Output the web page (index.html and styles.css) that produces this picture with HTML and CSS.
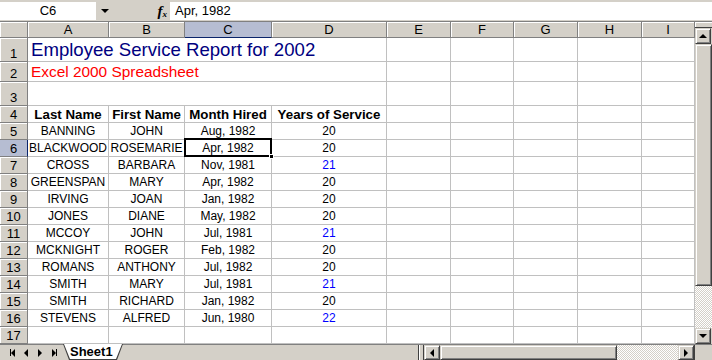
FILE: index.html
```html
<!DOCTYPE html>
<html lang="en">
<head>
    <meta charset="UTF-8">
    <title>Employee Service Report</title>
    <link rel="stylesheet" href="styles.css">
</head>
<body>
    <div class="app">
        <div class="formula-bar">
            <div class="name-box">C6</div>
            <div class="name-drop"><i class="tri-down"></i></div>
            <div class="fx"><i>f</i><span>x</span></div>
            <div class="formula">Apr, 1982</div>
        </div>

        <div class="workarea">
            <div class="sheet" id="sheet"></div>
            <div class="vscroll">
                <div class="split-v"></div>
                <div class="sbtn"><i class="tri-up"></i></div>
                <div class="vthumb"></div>
                <div class="track"></div>
                <div class="sbtn"><i class="tri-down"></i></div>
            </div>
        </div>

        <div class="bottom-bar">
            <div class="tab-nav">
                <span class="nav"><b class="bar"></b><i class="tri-left"></i></span>
                <span class="nav"><i class="tri-left"></i></span>
                <span class="nav"><i class="tri-right"></i></span>
                <span class="nav"><i class="tri-right"></i><b class="bar"></b></span>
            </div>
            <div class="tab"><span>Sheet1</span></div>
            <div class="tab-space"></div>
            <div class="split-h"></div>
            <div class="hscroll">
                <div class="sbtn"><i class="tri-left"></i></div>
                <div class="hthumb"></div>
                <div class="track"></div>
                <div class="sbtn"><i class="tri-right"></i></div>
            </div>
            <div class="corner"></div>
        </div>
    </div>

    <script>
        const letters = ['A', 'B', 'C', 'D', 'E', 'F', 'G', 'H', 'I'];
        const employees = [
            ['BANNING', 'JOHN', 'Aug, 1982', 20],
            ['BLACKWOOD', 'ROSEMARIE', 'Apr, 1982', 20],
            ['CROSS', 'BARBARA', 'Nov, 1981', 21],
            ['GREENSPAN', 'MARY', 'Apr, 1982', 20],
            ['IRVING', 'JOAN', 'Jan, 1982', 20],
            ['JONES', 'DIANE', 'May, 1982', 20],
            ['MCCOY', 'JOHN', 'Jul, 1981', 21],
            ['MCKNIGHT', 'ROGER', 'Feb, 1982', 20],
            ['ROMANS', 'ANTHONY', 'Jul, 1982', 20],
            ['SMITH', 'MARY', 'Jul, 1981', 21],
            ['SMITH', 'RICHARD', 'Jan, 1982', 20],
            ['STEVENS', 'ALFRED', 'Jun, 1980', 22]
        ];

        const sheet = document.getElementById('sheet');

        function makeRow(cls) {
            const row = document.createElement('div');
            row.className = 'row ' + cls;
            sheet.appendChild(row);
            return row;
        }

        function addCell(row, text, cls) {
            const cell = document.createElement('div');
            cell.className = 'cell ' + (cls || '');
            if (text !== undefined) cell.textContent = text;
            row.appendChild(cell);
            return cell;
        }

        // column letters
        const head = makeRow('head-row');
        addCell(head, '', 'hdr');
        letters.forEach(l => addCell(head, l, l === 'C' ? 'hdr col-hdr selected' : 'hdr col-hdr'));

        // title block, rows 1-3
        const titles = [
            ['Employee Service Report for 2002', 'title', 'r1'],
            ['Excel 2000 Spreadsheet', 'subtitle', 'r2'],
            ['', '', 'r3']
        ];
        titles.forEach((t, i) => {
            const row = makeRow(t[2]);
            addCell(row, i + 1, 'hdr row-hdr');
            addCell(row, t[0], 'wide ' + t[1]);
            for (let c = 4; c < 9; c++) addCell(row, '');
        });

        // column titles
        const r4 = makeRow('r-std');
        addCell(r4, 4, 'hdr row-hdr');
        ['Last Name', 'First Name', 'Month Hired', 'Years of Service'].forEach(t => addCell(r4, t, 'bold'));
        for (let c = 4; c < 9; c++) addCell(r4, '');

        employees.forEach((e, i) => {
            const n = i + 5;
            const row = makeRow('r-std');
            addCell(row, n, n === 6 ? 'hdr row-hdr selected' : 'hdr row-hdr');
            addCell(row, e[0]);
            addCell(row, e[1]);
            addCell(row, e[2], n === 6 ? 'active' : '');
            addCell(row, e[3], e[3] > 20 ? 'blue' : '');
            for (let c = 4; c < 9; c++) addCell(row, '');
        });

        const r17 = makeRow('r-std');
        addCell(r17, 17, 'hdr row-hdr');
        for (let c = 0; c < 9; c++) addCell(r17, '');
    </script>
</body>
</html>
```

FILE: styles.css
```css
body {
    margin: 0;
    padding: 0;
    width: 712px;
    height: 360px;
    overflow: hidden;
    background: #d4d0c8;
    font-family: "Liberation Sans", Arial, sans-serif;
    color: #000;
}
.app {
    display: flex;
    flex-direction: column;
    height: 360px;
}

/* formula bar */
.formula-bar {
    height: 21px;
    display: flex;
    padding-top: 2px;
    box-sizing: border-box;
}
.name-box {
    width: 96px;
    height: 18px;
    background: #fff;
    font-size: 13px;
    line-height: 18px;
    text-align: center;
}
.name-drop {
    width: 17px;
    height: 18px;
    display: flex;
    align-items: center;
    justify-content: center;
}
.fx {
    width: 57px;
    height: 18px;
    display: flex;
    justify-content: flex-end;
    align-items: center;
    padding-right: 3px;
    box-sizing: border-box;
    font-family: "Liberation Serif", serif;
    font-weight: bold;
}
.fx i {
    font-size: 15px;
}
.fx span {
    font-size: 9px;
    font-style: italic;
    margin-top: 5px;
}
.formula {
    flex: 1;
    height: 18px;
    background: #fff;
    padding-left: 5px;
    font-size: 13px;
    line-height: 18px;
}

/* sheet */
.workarea {
    display: flex;
    border-top: 1px solid #808080;
    height: 322px;
}
.sheet {
    width: 695px;
    background: #fff;
}
.row {
    display: grid;
    grid-template-columns: 28px 81px 76px 87px 115px 64px 63px 64px 64px 53px;
}
.head-row { height: 16px; }
.r1 { height: 24px; }
.r2 { height: 20px; }
.r3 { height: 24px; }
.r-std { height: 17px; }
.r1, .r2, .r3 {
    grid-template-columns: 28px 359px 64px 63px 64px 64px 53px;
}
.cell {
    position: relative;
    box-sizing: border-box;
    border-right: 1px solid #c0c0c0;
    border-bottom: 1px solid #c0c0c0;
    display: flex;
    align-items: flex-end;
    justify-content: center;
    font-size: 12px;
    line-height: 15px;
    white-space: nowrap;
}
.hdr {
    background: #d4d0c8;
    border-right-color: #808080;
    border-bottom-color: #808080;
    box-shadow: inset 1px 1px #fff;
    font-size: 13px;
}
.col-hdr {
    align-items: center;
}
.hdr.selected {
    background: #b6bdd2;
    box-shadow: none;
}
.col-hdr.selected {
    border-bottom-color: #0a246a;
}
.row-hdr.selected {
    border-right-color: #0a246a;
}
.wide {
    justify-content: flex-start;
    padding-left: 3px;
}
.title {
    color: #000080;
    font-size: 18.6px;
    line-height: 20px;
    padding-bottom: 1px;
}
.subtitle {
    color: #ff0000;
    font-size: 15.4px;
    line-height: 18px;
}
.bold {
    font-weight: bold;
    font-size: 13.3px;
}
.blue {
    color: #0000ff;
}
.active::after {
    content: "";
    position: absolute;
    left: -1px;
    top: -2px;
    right: -1px;
    bottom: -1px;
    border: 2px solid #000;
}
.active::before {
    content: "";
    position: absolute;
    right: -3px;
    bottom: -3px;
    width: 5px;
    height: 5px;
    background: #000;
    border: 1px solid #fff;
    box-sizing: border-box;
    z-index: 1;
}

/* scroll bars */
.vscroll {
    width: 17px;
    display: flex;
    flex-direction: column;
}
.split-v {
    height: 5px;
    border-bottom: 1px solid #404040;
    box-shadow: inset 1px 1px #fff;
}
.sbtn {
    width: 16px;
    height: 16px;
    box-sizing: border-box;
    background: #d4d0c8;
    border: 1px solid;
    border-color: #d4d0c8 #404040 #404040 #d4d0c8;
    box-shadow: inset 1px 1px #fff, inset -1px -1px #808080;
    display: flex;
    align-items: center;
    justify-content: center;
}
.vthumb {
    height: 242px;
    box-sizing: border-box;
    border: 1px solid;
    border-color: #d4d0c8 #404040 #404040 #d4d0c8;
    box-shadow: inset 1px 1px #fff, inset -1px -1px #808080;
}
.track {
    flex: 1;
    background-image: repeating-conic-gradient(#fff 0 25%, #d4d0c8 0 50%);
    background-size: 2px 2px;
}

/* bottom bar */
.bottom-bar {
    height: 16px;
    display: flex;
    border-top: 1px solid #808080;
    box-sizing: border-box;
}
.tab-nav {
    width: 63px;
    display: flex;
    align-items: center;
    padding-left: 5px;
    box-sizing: border-box;
}
.nav {
    width: 14px;
    display: flex;
    align-items: center;
    justify-content: center;
}
.bar {
    width: 1px;
    height: 7px;
    background: #000;
}
.tab {
    margin-top: -1px;
    height: 16px;
    width: 60px;
    background: #404040;
    clip-path: polygon(0 0, 100% 0, calc(100% - 6px) 100%, 6px 100%);
    display: flex;
}
.tab span {
    flex: 1;
    margin: 0 1px 1px;
    padding-left: 6px;
    background: #fff;
    font-weight: bold;
    font-size: 13px;
    line-height: 15px;
    clip-path: polygon(0 0, 100% 0, calc(100% - 6px) 100%, 6px 100%);
}
.tab-space {
    flex: 1;
}
.split-h {
    width: 4px;
    border-left: 1px solid #404040;
    border-right: 1px solid #404040;
    box-shadow: inset 1px 0 #fff;
}
.hscroll {
    width: 270px;
    display: flex;
}
.hthumb {
    width: 177px;
    box-sizing: border-box;
    border: 1px solid;
    border-color: #d4d0c8 #404040 #404040 #d4d0c8;
    box-shadow: inset 1px 1px #fff, inset -1px -1px #808080;
}
.hscroll .sbtn {
    height: 15px;
}
.corner {
    width: 17px;
    border-left: 1px solid #404040;
}

/* arrows */
.tri-down, .tri-up, .tri-left, .tri-right {
    width: 0;
    height: 0;
    display: block;
}
.tri-down {
    border-left: 4px solid transparent;
    border-right: 4px solid transparent;
    border-top: 4px solid #000;
}
.tri-up {
    border-left: 4px solid transparent;
    border-right: 4px solid transparent;
    border-bottom: 4px solid #000;
}
.tri-left {
    border-top: 4px solid transparent;
    border-bottom: 4px solid transparent;
    border-right: 4px solid #000;
}
.tri-right {
    border-top: 4px solid transparent;
    border-bottom: 4px solid transparent;
    border-left: 4px solid #000;
}
```
